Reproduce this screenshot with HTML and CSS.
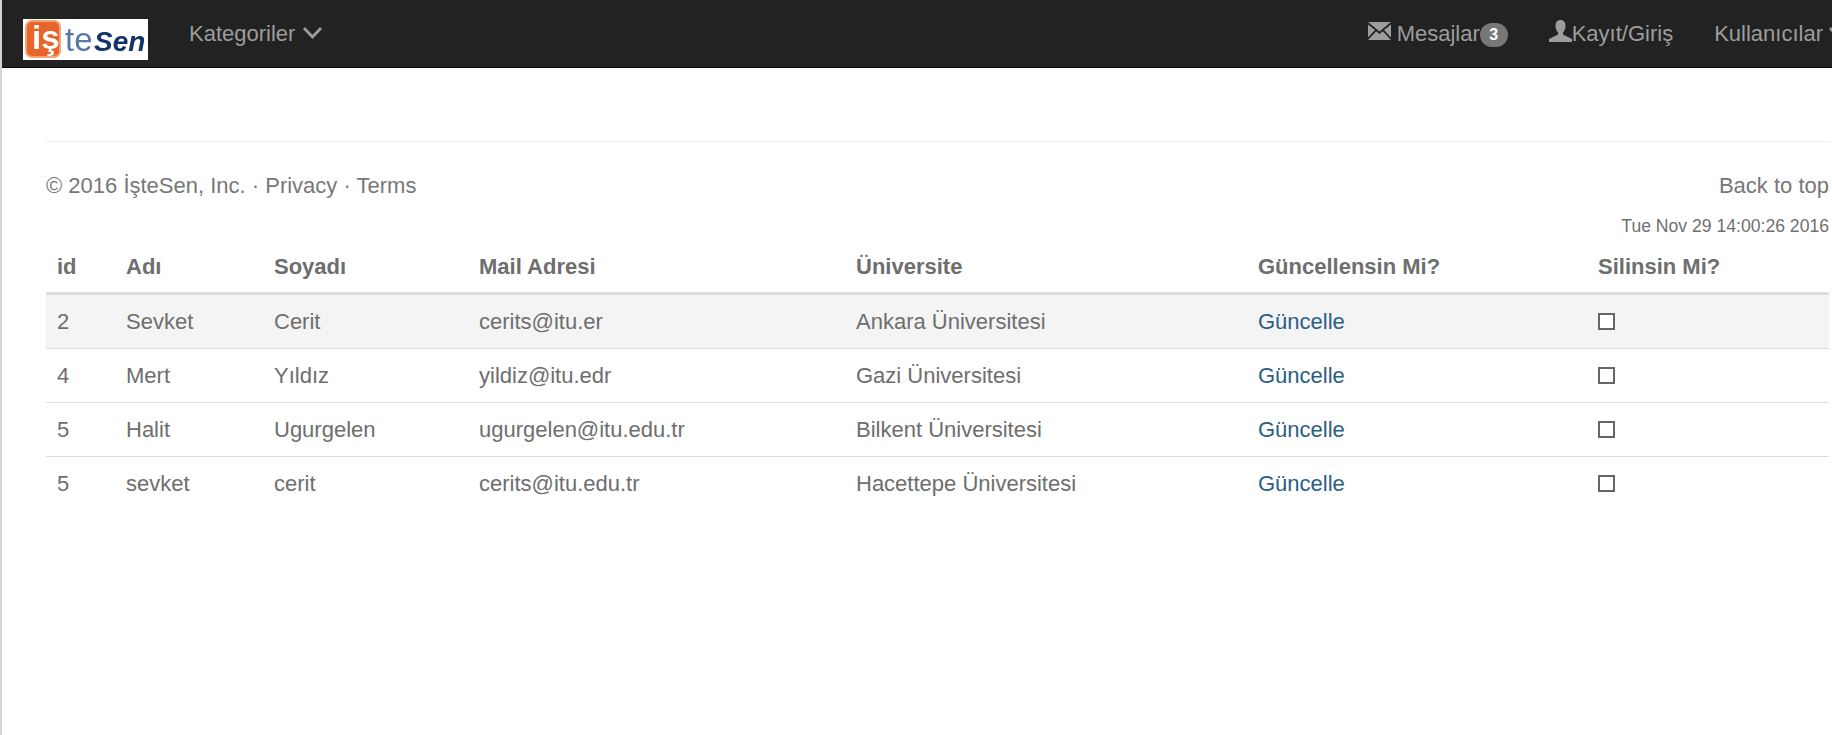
FILE: index.html
```html
<!DOCTYPE html>
<html lang="tr">
<head>
  <meta charset="utf-8">
  <title>İşteSen</title>
  <link rel="stylesheet" href="styles.css">
</head>
<body>
  <nav class="navbar">
    <a class="brand" href="#">
      <svg width="125" height="41" viewBox="0 0 125 41">
        <rect width="125" height="41" fill="#fff"/>
        <rect x="3" y="2" width="34" height="36" rx="6" fill="#e8652a" stroke="#f5a279" stroke-width="2"/>
        <text x="9" y="30" class="logo-is">iş</text>
        <text x="42" y="32" class="logo-te">te</text>
        <text x="71" y="32" class="logo-sen">Sen</text>
      </svg>
    </a>
    <a class="nav-link cat" href="#">Kategoriler
      <svg width="21" height="14" viewBox="0 0 21 14"><path d="M2 2 L10.5 11 L19 2" fill="none" stroke="#9d9d9d" stroke-width="2.8"/></svg>
    </a>
    <div class="nav-right">
      <a class="nav-link msg" href="#">
        <svg width="23" height="18" viewBox="0 0 23 18"><path d="M0 0H23L11.5 9.5ZM0 2.5V15.5L7 8ZM23 2.5V15.5L16 8ZM8.2 9.3L11.5 12L14.8 9.3L23 18H0Z" fill="#9d9d9d"/></svg>
        <span>Mesajlar</span><span class="badge">3</span>
      </a>
      <a class="nav-link user" href="#">
        <svg width="23" height="22" viewBox="0 0 23 22"><path d="M11.5 0C15 0 16.5 2.5 16.5 6C16.5 9 15 11.5 14 12.5V14.5L23 19V22H0V19L9 14.5V12.5C8 11.5 6.5 9 6.5 6C6.5 2.5 8 0 11.5 0Z" fill="#9d9d9d"/></svg>
        <span>Kayıt/Giriş</span>
      </a>
      <a class="nav-link more" href="#">Kullanıcılar
        <svg width="21" height="14" viewBox="0 0 21 14"><path d="M2 2 L10.5 11 L19 2" fill="none" stroke="#9d9d9d" stroke-width="2.8"/></svg>
      </a>
    </div>
  </nav>

  <div class="container">
    <hr class="rule">
    <footer class="foot">
      <p>© 2016 İşteSen, Inc. · <a href="#">Privacy</a> · <a href="#">Terms</a></p>
      <a href="#">Back to top</a>
    </footer>
    <div class="stamp">Tue Nov 29 14:00:26 2016</div>

    <table class="users">
      <colgroup>
        <col class="c-id"><col class="c-ad"><col class="c-soy"><col class="c-mail"><col class="c-uni"><col class="c-upd"><col class="c-del">
      </colgroup>
      <thead>
        <tr><th>id</th><th>Adı</th><th>Soyadı</th><th>Mail Adresi</th><th>Üniversite</th><th>Güncellensin Mi?</th><th>Silinsin Mi?</th></tr>
      </thead>
      <tbody>
        <tr><td>2</td><td>Sevket</td><td>Cerit</td><td>cerits@itu.er</td><td>Ankara Üniversitesi</td><td><a href="#">Güncelle</a></td><td><span class="check"></span></td></tr>
        <tr><td>4</td><td>Mert</td><td>Yıldız</td><td>yildiz@itu.edr</td><td>Gazi Üniversitesi</td><td><a href="#">Güncelle</a></td><td><span class="check"></span></td></tr>
        <tr><td>5</td><td>Halit</td><td>Ugurgelen</td><td>ugurgelen@itu.edu.tr</td><td>Bilkent Üniversitesi</td><td><a href="#">Güncelle</a></td><td><span class="check"></span></td></tr>
        <tr><td>5</td><td>sevket</td><td>cerit</td><td>cerits@itu.edu.tr</td><td>Hacettepe Üniversitesi</td><td><a href="#">Güncelle</a></td><td><span class="check"></span></td></tr>
      </tbody>
    </table>
  </div>
</body>
</html>
```

FILE: styles.css
```css
html, body { height: 100%; }
body {
  margin: 0;
  overflow: hidden;
  background: #fff;
  color: #777;
  font-family: "Liberation Sans", Arial, sans-serif;
  font-size: 22px;
  line-height: 31px;
  border-left: 2px solid #d4d4d4;
  box-sizing: border-box;
}
a { color: inherit; text-decoration: none; }

.navbar {
  display: flex;
  align-items: flex-start;
  height: 67px;
  background: #222;
  border-bottom: 1px solid #080808;
  margin-left: -2px;
  padding-left: 23px;
}
.brand { display: flex; margin-top: 19px; filter: blur(0.4px); }
.logo-is { font: bold 33px "Liberation Sans", sans-serif; fill: #fff; }
.logo-te { font: 33px "Liberation Sans", sans-serif; fill: #5a78a8; }
.logo-sen { font: italic bold 28px "Liberation Sans", sans-serif; fill: #12346b; }

.nav-link { display: flex; align-items: center; color: #9d9d9d; white-space: nowrap; height: 31px; margin-top: 18px; }
.nav-link svg { margin-top: -2px; }
.cat { margin-left: 41px; gap: 7px; }
.more { gap: 5px; }
.nav-right { display: flex; margin-left: auto; margin-right: -17px; gap: 41px; flex-shrink: 0; }
.nav-link.msg svg { margin-right: 6px; margin-top: -5px; }
.nav-link.user svg { margin-top: -5px; }
.badge {
  background: #777;
  color: #fff;
  font-size: 16px;
  font-weight: bold;
  line-height: 16px;
  padding: 4px 9.5px;
  border-radius: 14px;
  margin-top: 3px;
}

.container { padding: 0 3px 0 44px; }
.rule { border: 0; border-top: 1px solid #eee; margin: 73px 0 0; }
.foot { display: flex; justify-content: space-between; margin-top: 28px; }
.foot p { margin: 0; }
.stamp { text-align: right; font-size: 17.6px; line-height: 22px; margin-top: 14px; color: #707070; }

.users { width: 100%; border-collapse: collapse; table-layout: fixed; margin-top: 3px; }
.c-id { width: 69px; }
.c-ad { width: 148px; }
.c-soy { width: 205px; }
.c-mail { width: 377px; }
.c-uni { width: 402px; }
.c-upd { width: 340px; }
.users th, .users td { padding: 11px; text-align: left; }
.users th { font-weight: bold; color: #6e6e6e; border-bottom: 3px solid #ddd; padding-bottom: 10px; }
.users td { border-bottom: 1px solid #ddd; color: #6e6e6e; }
.users tbody tr:first-child { background: #f4f4f4; }
.users tbody tr:last-child td { border-bottom: 0; }
.users td a { color: #2a6083; }
.check { display: inline-block; width: 17px; height: 17px; box-sizing: border-box; border: 2px solid #666; background: #fff; vertical-align: -1px; }
```
